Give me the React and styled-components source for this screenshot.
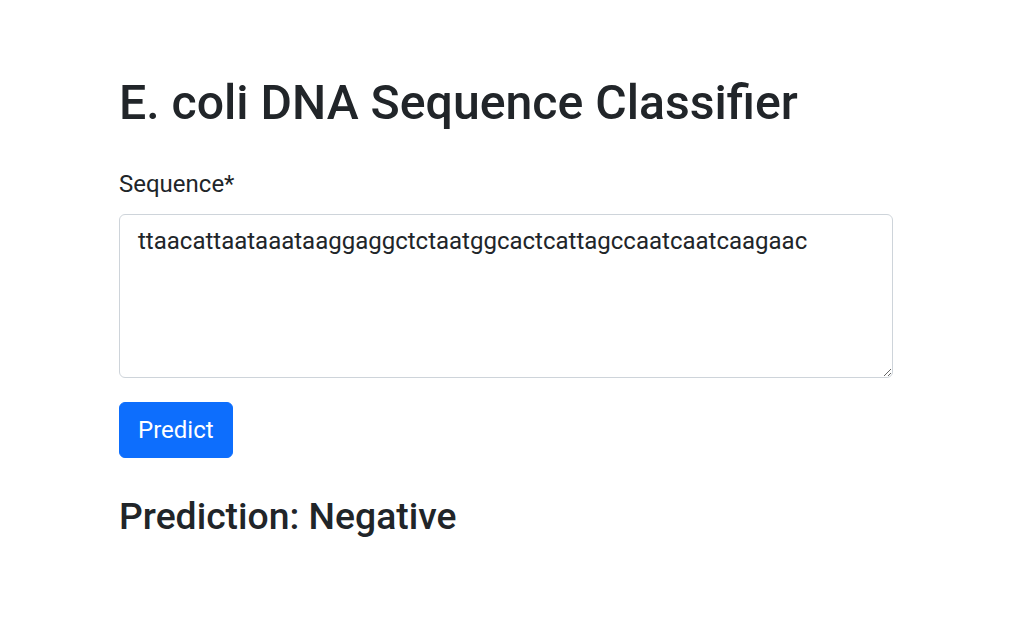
import React from "react";
import styled, { createGlobalStyle } from "styled-components";

const GlobalStyle = createGlobalStyle`
  body {
    margin: 0;
    background: #fff;
    color: #212529;
    font-family: Roboto, "Liberation Sans", sans-serif;
  }
  * { box-sizing: border-box; }
`;

const Page = styled.div`
  padding: 74px 0 0 119px;
`;

const Container = styled.div`
  width: 774px;
`;

const Title = styled.h1`
  margin: 0 0 34px;
  font-size: 48.2px;
  font-weight: 500;
  line-height: 1.2;
`;

const Label = styled.label`
  display: block;
  margin-bottom: 12px;
  font-size: 24px;
  line-height: 1.5;
`;

const SequenceInput = styled.textarea`
  display: block;
  width: 100%;
  height: 164px;
  padding: 8px 18px;
  border: 1px solid #ced4da;
  border-radius: 6px;
  font-family: inherit;
  font-size: 24px;
  line-height: 1.5;
  color: #212529;
  resize: vertical;
  outline: none;
`;

const PredictButton = styled.button`
  display: block;
  margin-top: 24px;
  height: 56px;
  padding: 0 18px;
  border: 1px solid #0d6efd;
  border-radius: 6px;
  background: #0d6efd;
  color: #fff;
  font-family: inherit;
  font-size: 24px;
  line-height: 1.5;
  cursor: pointer;
`;

const Result = styled.h3`
  margin: 36px 0 0;
  font-size: 37.3px;
  font-weight: 500;
  line-height: 1.2;
`;

export default function App() {
  return (
    <Page>
      <GlobalStyle />
      <Container>
        <Title>E. coli DNA Sequence Classifier</Title>
        <Label htmlFor="seq">Sequence*</Label>
        <SequenceInput
          id="seq"
          defaultValue="ttaacattaataaataaggaggctctaatggcactcattagccaatcaatcaagaac"
        />
        <PredictButton>Predict</PredictButton>
        <Result>Prediction: Negative</Result>
      </Container>
    </Page>
  );
}
